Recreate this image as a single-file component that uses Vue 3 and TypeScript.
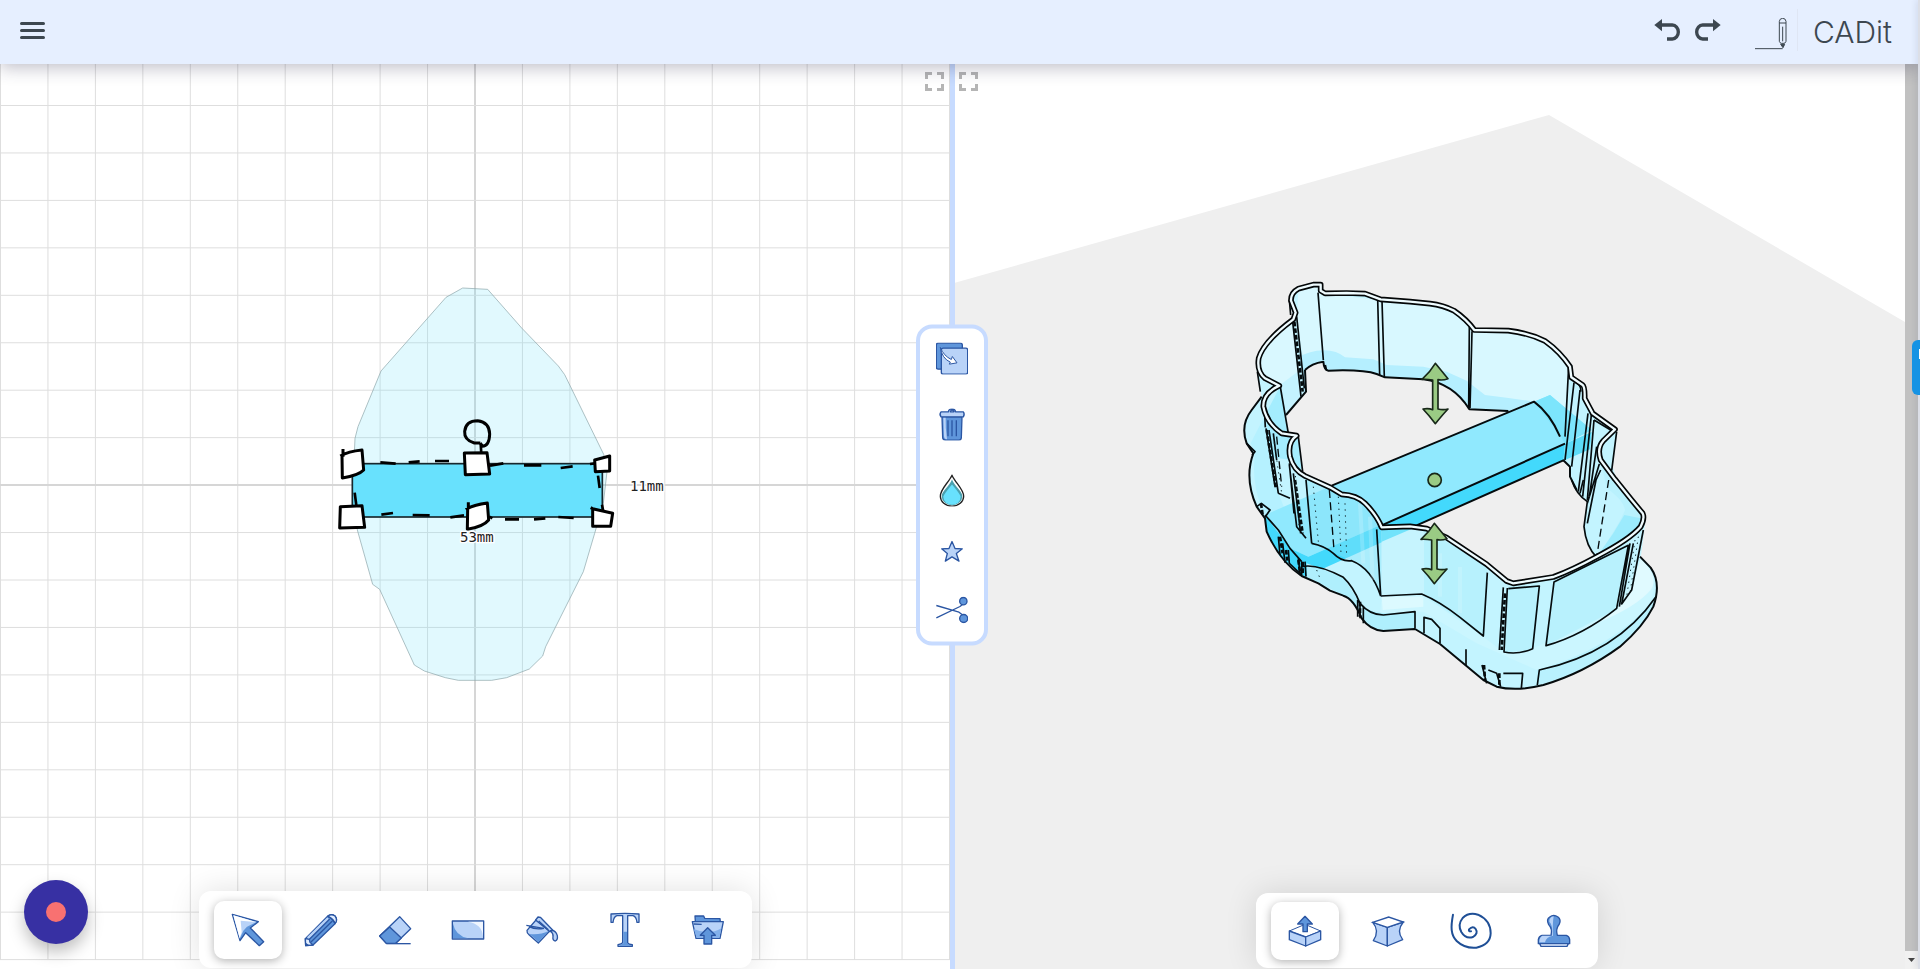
<script setup lang="ts">
const spacing = 47.45
const verticals = Array.from({ length: 21 }, (_, i) => ({ at: 0.5 + i * spacing, axis: i === 10 }))
const horizontals = Array.from({ length: 19 }, (_, i) => ({ at: 105.5 + i * spacing, axis: i === 8 }))

const rim =
  'M183 92 Q182 68 205 56 L250 44 L272 44 L272 62 L285 70 L350 69 L405 71 L452 88 L540 95 L600 101 Q640 106 672 122 Q710 148 733 180 L835 182 Q900 190 945 213 Q990 245 1020 290 L1024 322 L1058 345 Q1065 350 1064 385 L1088 430 L1155 478 L1120 512 Q1100 535 1112 570 L1155 628 L1205 690 L1238 730 Q1245 745 1232 770 Q1200 808 1100 860 Q1030 898 970 921 L850 940 L830 933 L770 883 L650 803 L590 776 L540 769 L455 772 Q440 735 405 700 Q380 675 335 673 L300 652 L225 618 Q190 600 180 560 Q172 515 200 497 L155 490 Q110 460 100 410 Q98 370 148 347 L105 325 Q80 305 86 265 Q100 215 190 148 L197 128 Z'
const silhouette =
  'M178 92 Q176 65 205 52 L272 38 L285 66 L405 66 L452 84 L600 96 Q650 102 675 118 Q710 142 736 176 L840 177 Q900 185 950 208 Q1000 245 1028 287 L1030 320 L1062 340 Q1072 355 1070 383 L1092 425 L1160 478 L1148 590 L1160 630 L1210 690 L1248 740 L1232 865 L1262 893 Q1295 940 1270 1010 Q1240 1070 1170 1130 Q1060 1210 940 1245 Q860 1265 800 1250 L760 1230 L630 1122 L555 1077 L460 1083 Q420 1080 395 1045 Q370 985 340 977 L300 962 L265 940 L215 918 Q150 875 110 785 L105 745 L80 710 Q45 630 70 548 L50 520 Q35 460 65 420 L95 380 L78 290 Q88 215 190 140 Z'
const arrow =
  'M0 0 L38 46 Q22 52 8 49 L8 137 Q24 141 38 137 Q22 154 0 181 Q-18 157 -37 137 Q-20 134 -8 139 L-8 50 Q-25 47 -40 48 Q-16 27 0 0 Z'
const arrows = [
  { x: 616, y: 280 },
  { x: 613, y: 760 },
]
</script>

<template>
  <div class="app">
    <header class="topbar">
      <button class="plain" aria-label="Menu">
        <svg width="25" height="17" viewBox="0 0 50 34"><path d="M3 3H47M3 17H47M3 31H47" stroke="#3d4750" stroke-width="6" stroke-linecap="round" /></svg>
      </button>
      <div class="right-tools">
        <button class="plain" aria-label="Undo">
          <svg width="27" height="22" viewBox="0 0 81 66"><path d="M20 18H55A18 21 0 0 1 55 60H39" fill="none" stroke="#3d4750" stroke-width="10" /><path d="M1 18L24 0V37Z" fill="#3d4750" /></svg>
        </button>
        <button class="plain redo" aria-label="Redo">
          <svg width="27" height="22" viewBox="0 0 81 66"><path d="M61 18H26A18 21 0 0 0 26 60H42" fill="none" stroke="#3d4750" stroke-width="10" /><path d="M80 18L57 0V37Z" fill="#3d4750" /></svg>
        </button>
        <svg class="mark" width="32" height="32" viewBox="0 0 96 96" fill="none" stroke="#3d4750" stroke-width="3"><path d="M0 92H83M73 70V10Q74 1 83 1Q92 1 93 10V70Q91 76 87 76H79Q74 75 73 70ZM73 15H93M83 26V70" /><path d="M77 79H89L84 89Z" fill="#3d4750" /></svg>
        <span class="brand">CADit</span>
      </div>
    </header>

    <main class="workspace">
      <section class="pane sketch">
        <svg class="canvas" viewBox="0 64 950 905" preserveAspectRatio="xMidYMid slice">
          <g stroke="#dedede">
            <line v-for="v in verticals" :key="'v' + v.at" :x1="v.at" :x2="v.at" y1="58" y2="960" :class="{ axis: v.axis }" />
            <line v-for="h in horizontals" :key="'h' + h.at" x1="0" x2="950" :y1="h.at" :y2="h.at" :class="{ axis: h.axis }" />
          </g>
          <svg x="320" y="270" width="360" height="430" viewBox="0 0 1080 1290">
            <path d="M378 82L428 54L503 58L605 174L715 288L734 314L851 553L861 605L850 700L824 790L790 905L677 1130L668 1158L628 1197L560 1223L515 1231H415L376 1223L313 1203L283 1185L179 958L158 943L112 780L98 660L105 505L114 470L183 303Z" fill="#68e0fb" fill-opacity=".2" stroke="#8fa6ab" stroke-opacity=".7" stroke-width="3" />
            <rect x="97" y="581" width="750" height="160" fill="#68e1fd" stroke="#17272c" stroke-width="5" />
            <g fill="none" stroke="#000" stroke-width="8">
              <path d="M181 577L227 581M266 577L299 574M345 573H387M510 587L550 580M612 586H664M722 594L758 589M810 582L825 580M834 617L839 654M104 668L109 706M184 734L219 729M278 735L329 736M391 742L432 736M508 740L517 745M555 748H597M642 748L676 745M715 741L761 744M846 704L850 725M482 520L484 552" />
              <path d="M481 519H463Q432 510 434 484Q437 452 473 452Q508 456 509 492Q508 528 487 529L481 519" stroke-width="9" />
            </g>
            <g fill="#fff" stroke="#000" stroke-width="9" stroke-linejoin="round">
              <path d="M66 555L67 624Q116 616 131 600L126 540Q85 544 61 558M69 537V560" />
              <path d="M433 549L501 548L509 612L436 614Z" />
              <path d="M824 570L869 558V603L826 605Z" />
              <path d="M61 710L126 707L134 772L59 774Z" />
              <path d="M443 716L442 778Q490 770 506 750L502 699Q462 704 437 718M445 697V718" />
              <path d="M818 716L878 730L872 769H818V715M812 713L820 717" />
            </g>
            <text x="930" y="663">11mm</text>
            <text x="420" y="816">53mm</text>
          </svg>
        </svg>
        <button class="expand end" aria-label="Expand sketch"><svg width="19" height="19" viewBox="0 0 38 38"><path d="M3 14V3H14M24 3H35V14M35 24V35H24M14 35H3V24" /></svg></button>
        <button class="fab" aria-label="Record"><i></i></button>
        <nav class="dock">
          <div class="toolbar tall">
            <div class="group">
              <button class="tool active" aria-label="Select">
                <svg viewBox="0 0 96 96"><path class="mid" d="M1 1L79 23L55 42L95 83L82 95L41 56L24 80Z" /><path d="M4 4L73 24L45 38L34 50L23 74Z" fill="#b9d3f8" /><path d="M4 4L73 24L26 20L29 55L23 72Z" fill="#fff" /></svg>
              </button>
              <button class="tool" aria-label="Draw">
                <svg viewBox="0 0 96 96"><path class="mid" d="M2 95L1 74L68 7Q78 -2 90 6Q99 18 90 29L24 93Z" /><path d="M6 70L67 10L73 17L11 76Z" fill="#b9d3f8" /><path class="pale" d="M68 7Q78 -2 90 6Q99 18 90 29Q88 16 68 7Z" /><path class="pale" d="M1 74L13 76L15 85L24 93L2 95Z" /><path class="line" d="M12 77L74 15M18 84L82 21M68 7Q80 9 90 29" /><path d="M2 95V86L12 93Z" fill="#2b56a3" /></svg>
              </button>
              <button class="tool" aria-label="Erase">
                <svg viewBox="0 0 96 96"><path class="light" d="M2 66L62 8L95 44L50 88H22Z" /><path class="mid" d="M2 66L32 39L67 72L50 88H22Z" /><path class="line" d="M22 89H95" /></svg>
              </button>
              <button class="tool" aria-label="Rectangle">
                <svg viewBox="0 0 96 96"><rect class="light" x="1" y="21" width="94" height="54" /><path d="M3 29Q10 65 49 73H3Z" fill="#5f96db" /><path d="M48 23H93V67Q90 30 48 23Z" fill="#f0f6ff" /></svg>
              </button>
              <button class="tool" aria-label="Fill">
                <svg viewBox="0 0 96 96"><path class="light" d="M30 18L3 49Q2 57 9 62L37 87L71 51Z" /><path d="M10 60Q42 64 67 51L38 84Z" fill="#5f96db" /><path class="light" d="M29 18L36 9L43 10L82 50L72 53Z" /><path class="light" d="M73 50Q89 47 94 65Q96 78 88 81Q79 79 81 68Q83 59 73 50Z" /><path class="line" d="M1 34L53 43M9 38Q28 48 54 43M38 21L67 47" /></svg>
              </button>
            </div>
            <button class="tool" aria-label="Text">
              <svg viewBox="0 0 96 96"><path class="light" d="M6 0Q48 -4 90 0V25H84Q82 8 72 5H56V86Q58 91 70 92V97H27V92Q38 91 41 86V5H24Q14 8 12 25H6Z" /><path d="M43 53H54V88L66 95H30L43 88Z" fill="#5f96db" /></svg>
            </button>
            <button class="tool" aria-label="Import">
              <svg viewBox="0 0 96 96"><path class="mid" d="M10 22L9 6H35L38 13L84 14L85 24Z" /><path class="light" d="M1 23L94 23L84 73H12Z" /><path d="M5 45Q50 65 88 43L82 71H14Z" fill="#82b0eb" /><path class="mid" d="M47 41L70 64H59V90H36V64H25Z" /><path class="line" d="M5 30L29 31" /></svg>
            </button>
          </div>
        </nav>
      </section>

      <div class="divider"></div>

      <section class="pane model">
        <svg class="canvas" viewBox="955 64 950 905" preserveAspectRatio="xMidYMid slice">
          <path d="M954 283L1549 115L1905 322V969H954Z" fill="#efefef" />
          <svg x="1230" y="270" width="440" height="430" viewBox="0 0 1320 1290" fill="none" stroke-linejoin="round">
            <path :d="silhouette" fill="#c3f4ff" />
            <!-- inner faces and floor of the wall -->
            <path d="M205 58L272 46L285 72L452 90L600 100L672 123L733 182H835L945 213L1020 290L1010 480L1085 480L912 395L835 423L718 418L640 345L465 322L290 302L225 300L200 150Z" fill="#d8f8ff" />
            <path d="M148 300Q180 260 260 242Q315 235 345 262L430 268L470 285L580 290L650 305L710 332L765 375L830 383L915 395L835 423L718 418Q680 365 640 345L580 328L465 322L400 303L290 302L280 275L225 300L228 365L165 435L148 347Z" fill="#b5efff" />
            <path d="M110 300L190 155L222 370L168 435L150 345Z" fill="#c4f3ff" />
            <path d="M108 430L150 350L172 490L205 500L218 610L185 570L115 560Z" fill="#94eafd" fill-opacity=".65" />
            <path d="M62 520L108 430L120 560L145 670L190 780L105 735Q62 650 75 548Z" fill="#b5f1ff" />
            <path d="M85 250Q120 200 185 160L210 300L150 345L95 325Z" fill="#d9f8ff" />
            <!-- bar crossing the wall -->
            <path d="M105 735L305 647L912 395L960 375L1085 480L1005 521L235 860L180 835Z" fill="#90e9fe" />
            <path d="M912 395L960 375L1085 480L1005 521L990 495Z" fill="#7ce5fc" />
            <path d="M105 735L180 835L235 860L1005 521L1000 572L225 920L150 860L110 785Z" fill="#43d9fc" />
            <path d="M1005 521L1085 486L1080 538L1000 572Z" fill="#5cdcf8" />
            <!-- openings -->
            <path d="M225 300L250 283L280 275L290 302L400 303L440 312L465 322L580 328Q670 340 718 418L835 423L305 647L215 605L205 500L175 490L168 435L228 365Z" fill="#efefef" />
            <path d="M560 768L1000 571L1020 590L1020 620Q1035 670 1072 695L1062 770Q1068 825 1098 862L970 920L850 938L770 885L650 805Z" fill="#efefef" />
            <!-- front wall faces -->
            <path d="M225 620L300 652L335 673Q410 680 455 772V978Q420 900 365 872L245 820Z" fill="#88e3f8" fill-opacity=".42" />
            <path d="M455 772L575 772L772 885L762 1098L582 975L455 978Z" fill="#c6f4fe" />
            <path d="M455 772L560 770L455 815Z" fill="#72e3fb" />
            <path d="M582 778L772 885L762 1098L582 975Z" fill="#a8edfb" fill-opacity=".5" />
            <path d="M455 980L575 975L760 1100L820 1147L910 1135L1160 1020L1230 870Q1300 940 1250 1010Q1120 1160 920 1200L740 1120L580 1025L450 1030Z" fill="#cbf6ff" />
            <path d="M455 980H580V1010L458 1020Z" fill="#dcfaff" />
            <path d="M1160 1020L1200 960L1232 868Q1290 920 1262 960Q1220 1010 1100 1060Z" fill="#e0faff" />
            <path d="M835 950L928 945L910 1138L822 1148ZM972 938L1195 825L1160 1018L948 1127Z" fill="#b8f1fd" />
            <path d="M1110 560L1155 630L1232 720L1230 770L1100 862Q1170 760 1185 720Q1180 690 1130 655Z" fill="#b7f0fd" fill-opacity=".8" />
            <path d="M1100 862L1150 790L1183 735L1232 745L1230 770Z" fill="#9cebfd" />
            <path d="M920 1200Q1140 1140 1275 990Q1270 1040 1170 1130Q1060 1210 920 1245Z" fill="#b9f1fe" />
            <path d="M400 1010Q440 1040 555 1025V1075L460 1083Q415 1080 395 1045ZM230 880L340 922L390 1000V1030L350 980L230 920Z" fill="#afeffd" />

            <g stroke="#050b0d" stroke-width="5">
              <path d="M95 380L65 420Q30 465 50 520L70 550Q42 625 80 710L105 745L110 785Q150 875 215 918L265 940L300 962L340 977Q370 985 395 1045Q420 1080 460 1083L555 1077L630 1122L760 1230L800 1250Q860 1265 940 1245Q1060 1210 1170 1130Q1240 1070 1270 1010Q1295 940 1262 893L1230 860" stroke-width="6" />
              <path d="M225 300Q245 280 280 275Q282 300 295 302Q400 298 440 312L465 322L580 328Q670 340 718 418L835 423M225 300L228 365L168 435M305 647L912 395Q960 430 990 500M455 766L1005 521M560 766L1000 571L1020 590V620L1040 660" stroke-width="6" />
              <path d="M188 155L213 380M200 140L223 355M264 68L280 270M286 285L290 302M443 86L449 315M456 92L463 322M718 170L716 415M726 184L720 415M150 345L175 490M205 500L218 605M178 90L182 135M82 305L91 365M102 395L106 472" />
              <path d="M1016 290L1005 500M1032 338L1005 570M1050 360L1025 590M1074 430L1045 665M1084 435L1058 680M1092 450L1072 690M1100 530L1078 680M1160 485L1145 602M1092 450L1142 480M1108 582L1072 700M1112 600L1098 630L1072 760M1035 335Q1055 345 1052 365M1072 695L1062 770Q1068 830 1100 862" />
              <path d="M1025 630Q1038 672 1072 695M1050 670L1060 630" />
              <path d="M108 475L135 650M117 480L145 670M130 490L140 570M145 670L180 685M178 585L200 770L228 805M190 610L212 790M228 630L245 820M245 820Q285 828 310 850Q335 876 365 872Q425 895 452 978M440 778L452 975M178 580L192 730" />
              <path d="M452 978L575 972Q630 995 690 1042L760 1098L772 908M820 952L808 1140M832 954L822 1146Q865 1155 908 1136L928 948L835 956M972 936L1195 826L1160 1015Q1060 1095 948 1127ZM1210 820L1175 1002L1205 960L1240 780M1200 820L1168 1010" />
              <path d="M215 890Q260 880 340 922Q370 950 390 1000Q420 1035 460 1035L555 1025V1075M383 990V1040M390 1000V1045M400 1010V1060M582 1090V1042L605 1048L630 1075V1120M708 1138V1188M756 1185L770 1240M775 1200L800 1210L812 1250M820 1210H878L874 1255M922 1245L928 1200Q1160 1150 1278 980" />
              <path d="M50 520L75 545L66 555M80 710L94 700L120 720L105 742M105 735L145 780L180 835L215 875M145 800L150 855M158 820L165 878M175 840L178 880L215 915M205 865L210 910M215 875V915M225 875L228 920" />
            </g>
            <g stroke="#050b0d" stroke-width="8" stroke-dasharray="14 6"><path d="M193 155L218 365M110 480L138 655M195 630L218 790M825 970L815 1140M762 1185L765 1230M808 1210V1250M93 700L98 735M150 800L158 850M168 840L172 872M205 870L211 915M218 875V915M390 995V1040" /></g>
            <g stroke="#12262b" stroke-width="3" stroke-dasharray="4 14"><path d="M130 500L155 670M195 600L208 780M250 650L265 815M325 680L333 850M345 700L350 860M1215 810L1190 980M1225 800L1200 970M260 900L270 925" /></g>
            <path d="M298 660L312 840M140 500L155 650M1136 630L1100 862" stroke="#050b0d" stroke-width="4" stroke-dasharray="24 13" />
            <path d="M390 700L400 880M420 740L428 930M630 850V980M690 890V1030" stroke="#e7fbff" stroke-width="12" stroke-opacity=".22" />
            <path :d="rim" stroke="#030607" stroke-width="17" />
            <path :d="rim" stroke="#effcff" stroke-width="7" />
            <g fill="#9acb84" stroke="#182819" stroke-width="5">
              <path v-for="a in arrows" :key="a.y" :d="arrow" :transform="`translate(${a.x} ${a.y})`" />
              <circle cx="614" cy="630" r="20" />
            </g>
          </svg>
        </svg>
        <button class="expand start" aria-label="Expand model"><svg width="19" height="19" viewBox="0 0 38 38"><path d="M3 14V3H14M24 3H35V14M35 24V35H24M14 35H3V24" /></svg></button>
        <nav class="dock">
          <div class="toolbar">
            <button class="tool active" aria-label="Extrude">
              <svg viewBox="0 0 96 96"><path d="M1 48L48 28L95 48L50 66Z" fill="#fff" stroke="#2b56a3" stroke-width="3" /><path class="light" d="M1 48L50 66V93L1 74Z" /><path class="light" d="M50 66L95 48V74L50 93Z" /><path class="mid" d="M48 4L70 27H55V50H42V27H26Z" /></svg>
            </button>
            <button class="tool" aria-label="Warp">
              <svg viewBox="0 0 96 96"><path class="light" d="M2 22L46 37V93L4 77Q24 47 2 22Z" /><path class="light" d="M46 37L94 21Q72 48 92 74L46 93Z" /><path d="M2 22L50 6L94 21L46 37Z" fill="#fff" stroke="#2b56a3" stroke-width="4" /></svg>
            </button>
            <button class="tool" aria-label="Spiral">
              <svg class="wide" viewBox="0 0 126 108"><path d="M9 5C2 42 2 66 20 84Q44 107 79 104Q121 96 122 61Q122 22 84 5Q56-3 38 15Q22 35 34 57Q47 79 69 72Q86 61 77 48Q69 37 57 49Q55 56 63 55" fill="none" stroke="#1f4f96" stroke-width="6" stroke-linecap="round" stroke-linejoin="round" /></svg>
            </button>
            <button class="tool" aria-label="Stamp">
              <svg viewBox="0 0 96 96"><path class="mid" d="M39 61Q44 42 32 29Q24 13 35 6Q47-3 60 6Q70 14 64 27Q52 42 58 61H85Q94 64 95 74V86H1V74Q2 64 12 61Z" /><path d="M47 4Q34 6 34 20Q45 28 42 62H13Q4 67 4 82H21Q24 65 45 62Q43 27 47 4Z" fill="#b9d3f8" /><path class="pale" d="M5 86H91L87 94H9Z" /></svg>
            </button>
          </div>
        </nav>
      </section>
      <div class="scroll"><svg width="13" height="18" viewBox="0 0 26 36"><path d="M6 14H20L13 22Z" fill="#444" /></svg></div>
    </main>

    <aside class="actions">
      <button class="plain" aria-label="Duplicate"><svg width="32" height="32" viewBox="0 0 96 96"><rect class="mid" x="1" y="2" width="78" height="78" rx="6" /><rect class="light" x="16" y="17" width="79" height="78" rx="6" /><path d="M13 15Q23 40 46 51L49 42L63 61L40 65L43 59Q18 48 13 15Z" fill="#fff" stroke="#2b56a3" stroke-width="3" /></svg></button>
      <button class="plain" aria-label="Delete"><svg width="32" height="32" viewBox="0 0 96 96"><path class="mid" d="M18 25H78L76 88Q75 95 68 95H28Q20 94 20 86Z" /><path d="M22 27L24 83Q25 92 33 92Q28 60 29 27Z" fill="#b9d3f8" /><path class="light" d="M37 10Q38 1 48 1Q58 2 59 10H82Q87 17 82 25H15Q9 17 15 10ZM43 10H54Q52 5 48 5Q44 5 43 10Z" /><path class="line" d="M36 35V83M48 35V83M61 35V83" /></svg></button>
      <button class="plain" aria-label="Colour"><svg width="32" height="32" viewBox="0 0 96 96"><path d="M48 2C38 24 13 44 13 65A35 30 0 0 0 83 65C83 44 57 24 48 2Z" fill="#fff" stroke="#222" stroke-width="4" /><path d="M48 15C40 35 17 50 17 65A31 27 0 0 0 79 65C79 50 56 35 48 15Z" fill="#4ba1af" /><path d="M48 30Q22 61 22 67A26 24 0 0 0 74 67Q73 59 48 30Z" fill="#68e1fd" /></svg></button>
      <button class="plain" aria-label="Favourite"><svg width="22" height="22" viewBox="0 0 66 66"><path class="light" d="M33 3L42 24L64 25L46 39L54 62L33 49L13 62L19 39L2 25L24 24Z" /></svg></button>
      <button class="plain" aria-label="Cut"><svg width="32" height="27" viewBox="0 0 96 81"><path class="line" d="M1 27L69 47L82 57M1 64L72 30L82 22" /><circle class="mid" cx="82" cy="14" r="11" /><circle class="mid" cx="83" cy="66" r="12" /></svg></button>
    </aside>
    <div class="edge"></div>
    <button class="tab" aria-label="Help"><i></i></button>
  </div>
</template>

<style>
html,
body {
  overflow: hidden;
}
</style>

<style scoped>
.app {
  position: relative;
  display: flex;
  flex-direction: column;
  height: 100vh;
  overflow: hidden;
  font-family: Inter, "Liberation Sans", sans-serif;
}
button {
  display: flex;
  padding: 0;
  border: 0;
  background: none;
  cursor: pointer;
}
svg {
  display: block;
}
.topbar {
  position: relative;
  z-index: 2;
  box-sizing: border-box;
  height: 64px;
  flex: none;
  display: flex;
  align-items: center;
  justify-content: space-between;
  padding: 0 28px 4px 20px;
  background: #e6efff;
  box-shadow: 0 4px 16px rgba(50, 45, 80, 0.3);
}
.right-tools {
  display: flex;
  align-items: center;
}
.redo {
  margin-left: 13px;
}
.mark {
  margin: 7px 10px 0 34px;
}
.brand {
  padding: 4px 0 0 15px;
  border-left: 1px solid #dfe6f4;
  color: #3d4750;
  font-size: 30px;
  font-weight: 300;
  line-height: 38px;
}
.workspace {
  flex: 1;
  min-height: 0;
  display: flex;
}
.pane {
  position: relative;
  flex: 1;
  min-width: 0;
  display: flex;
  align-items: flex-end;
  justify-content: center;
  overflow: hidden;
  background: #fff;
}
.canvas {
  position: absolute;
  inset: 0;
  width: 100%;
  height: 100%;
}
.axis {
  stroke: #d6d6d6;
  stroke-width: 2px;
}
.canvas text {
  font: 42px "DejaVu Sans Mono", monospace;
  fill: #222;
  stroke: #fff;
  stroke-width: 8px;
  paint-order: stroke;
}
.divider {
  width: 5px;
  flex: none;
  background: #c7dbff;
}
.expand {
  position: absolute;
  top: 8px;
}
.expand path {
  fill: none;
  stroke: #b5b5b5;
  stroke-width: 6px;
}
.end {
  right: 6px;
}
.start {
  left: 4px;
}
.fab {
  position: absolute;
  left: 24px;
  bottom: 25px;
  width: 64px;
  height: 64px;
  align-items: center;
  justify-content: center;
  border-radius: 50%;
  background: #3730a3;
  box-shadow: 0 8px 16px rgba(0, 0, 0, 0.25);
}
.fab i {
  width: 20px;
  height: 20px;
  border-radius: 50%;
  background: #f87171;
}
.dock {
  position: relative;
  padding-bottom: 1px;
}
.model .dock {
  padding-right: 6px;
}
.toolbar {
  display: flex;
  gap: 15px;
  padding: 9px 10px 8px 15px;
  border-radius: 12px;
  background: #fff;
  box-shadow: 0 0 32px rgba(0, 0, 0, 0.12);
}
.tall {
  padding-top: 10px;
  padding-bottom: 9px;
}
.group {
  width: 362px;
  display: flex;
  justify-content: space-between;
}
.tool {
  width: 68px;
  height: 58px;
  align-items: center;
  justify-content: center;
  border-radius: 10px;
}
.tool svg {
  width: 32px;
  height: 32px;
  overflow: visible;
}
.tool .wide {
  width: 42px;
  height: 36px;
}
.active {
  box-shadow: 0 2px 10px rgba(0, 0, 0, 0.3);
}
.light,
.mid,
.pale,
.line {
  stroke: #2b56a3;
  stroke-width: 4px;
  stroke-linejoin: round;
}
.light {
  fill: #b9d3f8;
}
.mid {
  fill: #5f96db;
}
.pale {
  fill: #e0edff;
}
.line {
  fill: none;
}
.scroll {
  width: 13px;
  flex: none;
  margin-right: 2px;
  display: flex;
  flex-direction: column;
  background: #f1f1f1;
}
.scroll::before {
  content: "";
  flex: 1;
  background: #c1c1c1;
}
.actions {
  position: absolute;
  z-index: 1;
  left: calc(50% - 8px);
  top: 50%;
  transform: translate(-50%, -50%);
  box-sizing: border-box;
  width: 72px;
  display: flex;
  flex-direction: column;
  align-items: center;
  gap: 34px;
  padding: 14px 0 18px;
  border: 4px solid #c7dbff;
  border-radius: 16px;
  background: #fff;
}
.edge {
  position: absolute;
  z-index: 3;
  top: 0;
  right: 0;
  bottom: 0;
  width: 2px;
  background: #dcdfe7;
  box-shadow: 0 0 6px rgba(50, 60, 90, 0.3);
}
.tab {
  position: absolute;
  z-index: 4;
  right: 0;
  top: 340px;
  width: 8px;
  height: 55px;
  justify-content: flex-end;
  overflow: hidden;
  border-radius: 6px 0 0 6px;
  background: #1593e4;
}
.tab i {
  width: 1px;
  height: 10px;
  align-self: flex-start;
  margin-top: 9px;
  background: #fff;
}
</style>
